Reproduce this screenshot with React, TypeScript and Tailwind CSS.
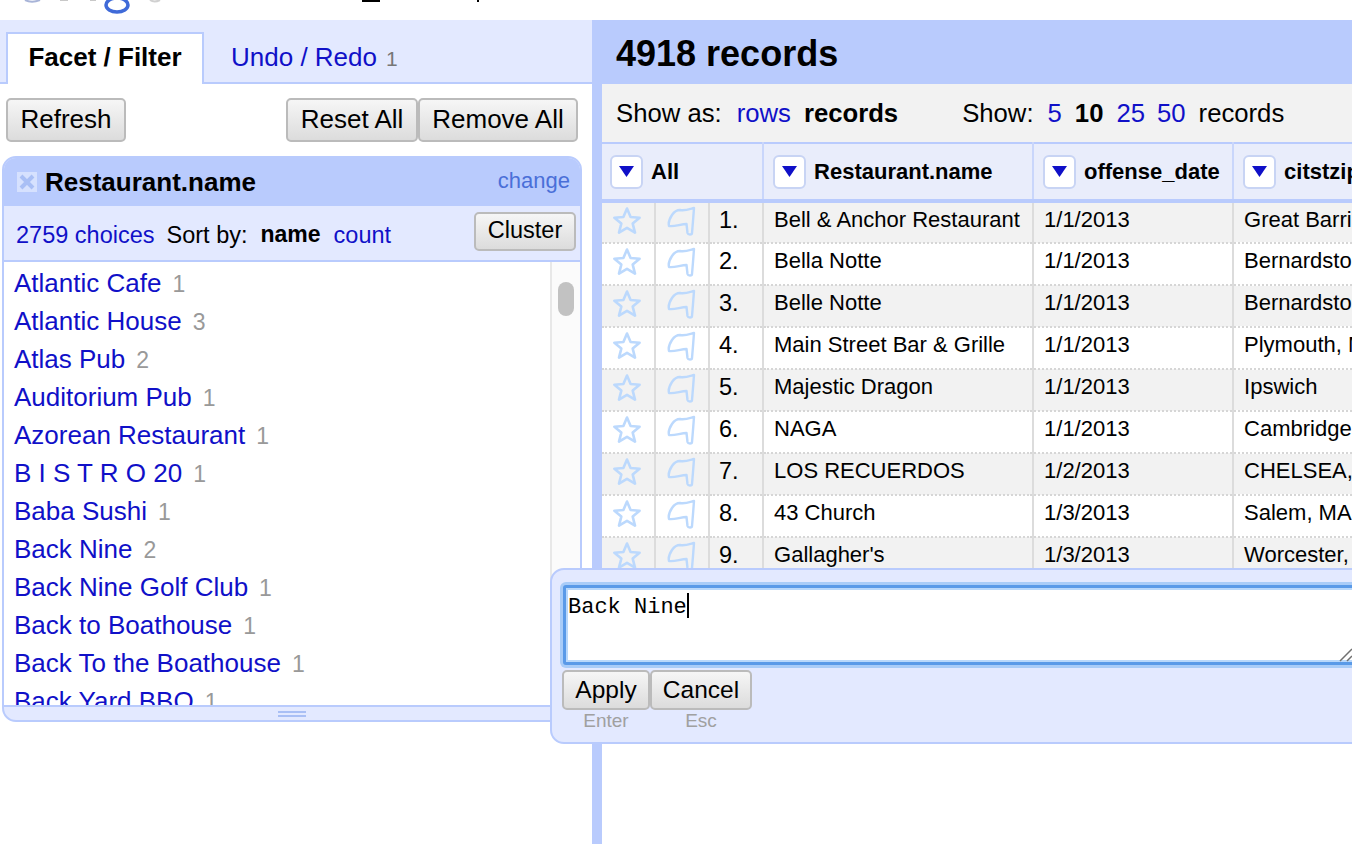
const facets: [string, number][] = [
  ["Atlantic Cafe", 1],
  ["Atlantic House", 3],
  ["Atlas Pub", 2],
  ["Auditorium Pub", 1],
  ["Azorean Restaurant", 1],
  ["B I S T R O 20", 1],
  ["Baba Sushi", 1],
  ["Back Nine", 2],
  ["Back Nine Golf Club", 1],
  ["Back to Boathouse", 1],
  ["Back To the Boathouse", 1],
  ["Back Yard BBQ", 1],
];

const rows = [
  ["1.", "Bell & Anchor Restaurant", "1/1/2013", "Great Barrington, MA"],
  ["2.", "Bella Notte", "1/1/2013", "Bernardston, MA"],
  ["3.", "Belle Notte", "1/1/2013", "Bernardston, MA"],
  ["4.", "Main Street Bar & Grille", "1/1/2013", "Plymouth, MA"],
  ["5.", "Majestic Dragon", "1/1/2013", "Ipswich"],
  ["6.", "NAGA", "1/1/2013", "Cambridge, MA"],
  ["7.", "LOS RECUERDOS", "1/2/2013", "CHELSEA, MA"],
  ["8.", "43 Church", "1/3/2013", "Salem, MA"],
  ["9.", "Gallagher's", "1/3/2013", "Worcester, MA"],
];

function Star() {
  return (
    <svg className="block blur-[0.4px]" width="30" height="30" viewBox="0 0 30 30" fill="none">
      <path d="M15 2.500l3.600 8.500 9 .7-6.900 5.900 2.300 9L15 21.800 7 26.600l2.300-9-6.900-5.900 9-.7z" stroke="#bcd9fd" strokeWidth="2.600" strokeLinejoin="round" />
    </svg>
  );
}

function Flag() {
  return (
    <svg className="block blur-[0.4px]" width="30" height="30" viewBox="0 0 30 30" fill="none">
      <path d="M6 9C8 6 10 4 14 4c5 1 10-1 14-2l-1 13-1 12c0 2-4 2-4.500 0l-1-9C15 18 8 21 3 20 2 16 4 12 6 9z" stroke="#bcd9fd" strokeWidth="2.400" strokeLinejoin="round" />
    </svg>
  );
}

function Arrow() {
  return (
    <span className="flex h-[34px] w-[33px] shrink-0 items-center justify-center rounded-[6px] border-2 border-[#c8d4f4] bg-white">
      <svg width="15" height="11" viewBox="0 0 15 11">
        <path d="M0 0h15L7.500 11z" fill="#1010c8" />
      </svg>
    </span>
  );
}

function Btn({ children, className = "" }: { children: React.ReactNode; className?: string }) {
  return (
    <button className={"flex items-center justify-center rounded-[5px] border-2 border-[#bbbbbb] bg-gradient-to-b from-[#f6f6f6] to-[#dcdcdc] text-black " + className}>
      {children}
    </button>
  );
}

export default function App() {
  return (
    <div className="relative flex h-[844px] w-[1352px] flex-col overflow-hidden bg-white font-['Liberation_Sans',Arial,sans-serif] text-[26px] text-black">
      <header className="relative h-5 shrink-0 overflow-hidden bg-white">
        <svg className="absolute left-[20px] top-0 blur-[0.6px]" width="150" height="16" viewBox="0 0 150 16" fill="none">
          <path d="M5 0c4 2 10 2 15 0" stroke="#a8b4d8" strokeWidth="2" />
          <path d="M40 0h8M70 0h6" stroke="#c8c8c8" strokeWidth="2" />
          <ellipse cx="97" cy="5" rx="11" ry="7" stroke="#3f6ad8" strokeWidth="3.500" />
          <path d="M130 0c3 2 6 2 10 0" stroke="#d0d0d0" strokeWidth="2" />
        </svg>
        <span className="absolute left-[362px] top-0 h-[2px] w-[18px] bg-black"></span>
        <span className="absolute left-[477px] top-0 h-[2px] w-[2px] bg-black"></span>
      </header>

      <main className="flex min-h-0 flex-1">
        <aside className="flex h-full w-[592px] shrink-0 flex-col">
          <div className="flex h-[64px] shrink-0 items-end border-b-2 border-[#b9cbfd] bg-[#e3e9ff] pl-[6px]">
            <div className="-mb-[2px] flex h-[52px] w-[198px] items-center justify-center border-2 border-b-0 border-[#b9cbfd] bg-white pb-[4px] font-bold">
              Facet / Filter
            </div>
            <div className="flex h-[50px] items-center pl-[27px] text-[#1010c8]">
              Undo / Redo<span className="ml-[9px] mt-[3px] text-[21px] text-[#777777]">1</span>
            </div>
          </div>

          <div className="flex items-start justify-between pl-[6px] pr-[14px] pt-[14px]">
            <Btn className="h-[44px] w-[120px] pb-[2px]">Refresh</Btn>
            <div className="flex">
              <Btn className="h-[44px] w-[132px] pb-[2px]">Reset All</Btn>
              <Btn className="h-[44px] w-[160px] pb-[2px]">Remove All</Btn>
            </div>
          </div>

          <section className="ml-[2px] mr-[10px] mt-[14px] flex h-[566px] flex-col overflow-hidden rounded-[14px] border-2 border-[#b9cbfd] bg-[#e3e9ff]">
            <div className="flex h-[48px] shrink-0 items-center justify-between bg-[#b9cbfd] pl-[13px] pr-[10px]">
              <div className="flex items-center gap-[8px]">
                <span className="flex h-[20px] w-[20px] items-center justify-center bg-[#d6e1fe]">
                  <svg width="16" height="16" viewBox="0 0 16 16"><path d="M2 2l12 12M14 2L2 14" stroke="#a9bff5" strokeWidth="4" /></svg>
                </span>
                <span className="font-bold">Restaurant.name</span>
              </div>
              <span className="mb-[3px] text-[22px] text-[#4a6fd8]">change</span>
            </div>
            <div className="flex h-[56px] shrink-0 items-center justify-between border-b-2 border-[#b9cbfd] pl-[12px] pr-[4px] text-[23.5px]">
              <div className="flex items-center pt-[5px]">
                <span className="text-[#1010c8]">2759 choices</span>
                <span className="ml-[12px]">Sort by:</span>
                <b className="-mt-[2px] ml-[13px] text-[23px]">name</b>
                <span className="ml-[13px] text-[#1010c8]">count</span>
              </div>
              <Btn className="mb-[4px] h-[39px] w-[102px] text-[23.5px]">Cluster</Btn>
            </div>
            <div className="relative min-h-0 flex-1 overflow-hidden bg-white pl-[10px]">
              <ul className="pt-[2px]">
                {facets.map(([name, n]) => (
                  <li key={name} className="flex h-[38px] items-center whitespace-nowrap">
                    <span className="text-[#1010c8]">{name}</span>
                    <span className="ml-[11px] mt-[2px] text-[23px] text-[#999999]">{n}</span>
                  </li>
                ))}
              </ul>
              <div className="absolute bottom-0 right-0 top-0 w-[30px] border-l-2 border-[#e8e8e8] bg-[#fbfbfb]">
                <div className="ml-[6px] mt-[20px] h-[34px] w-[16px] rounded-full bg-[#c2c2c2]"></div>
              </div>
            </div>
            <div className="flex h-[15px] shrink-0 flex-col items-center justify-center gap-[2px] border-t-2 border-[#b9cbfd]">
              <span className="h-[2px] w-[28px] bg-[#a9bff5]"></span>
              <span className="h-[2px] w-[28px] bg-[#a9bff5]"></span>
            </div>
          </section>
        </aside>

        <div className="h-full w-[10px] shrink-0 bg-[#b9cbfd]"></div>

        <section className="flex min-w-0 flex-1 flex-col overflow-hidden">
          <div className="-ml-[10px] flex h-[64px] shrink-0 items-center bg-[#b9cbfd] pl-[24px] pt-[4px] text-[36px] font-bold">
            4918 records
          </div>
          <div className="flex h-[58px] shrink-0 items-center bg-[#f2f2f2] pl-[14px] text-[25.7px]">
            <span>Show as:</span>
            <span className="ml-[15px] text-[#1010c8]">rows</span>
            <b className="ml-[13px]">records</b>
            <span className="ml-[64px]">Show:</span>
            <span className="ml-[14px] text-[#1010c8]">5</span>
            <b className="ml-[13px]">10</b>
            <span className="ml-[13px] text-[#1010c8]">25</span>
            <span className="ml-[12px] text-[#1010c8]">50</span>
            <span className="ml-[13px]">records</span>
          </div>

          <table className="w-[750px] table-fixed border-collapse text-[22px] leading-[26px]">
            <colgroup>
              <col className="w-[53px]" />
              <col className="w-[54px]" />
              <col className="w-[54px]" />
              <col className="w-[270px]" />
              <col className="w-[200px]" />
              <col className="w-[119px]" />
            </colgroup>
            <thead>
              <tr className="h-[58px] border-t-2 border-b-4 border-[#b9cbfd] bg-[#e9edfb]">
                <th colSpan={3} className="border-r-2 border-[#c9d6fb] pl-[8px] text-left font-bold">
                  <span className="flex items-center gap-[8px]"><Arrow />All</span>
                </th>
                <th className="border-r-2 border-[#c9d6fb] pl-[9px] text-left font-bold">
                  <span className="flex items-center gap-[8px] whitespace-nowrap"><Arrow />Restaurant.name</span>
                </th>
                <th className="border-r-2 border-[#c9d6fb] pl-[9px] text-left font-bold">
                  <span className="flex items-center gap-[8px] whitespace-nowrap"><Arrow />offense_date</span>
                </th>
                <th className="overflow-hidden pl-[9px] text-left font-bold">
                  <span className="flex items-center gap-[8px] whitespace-nowrap"><Arrow />citstzip</span>
                </th>
              </tr>
            </thead>
            <tbody>
              {rows.map((r, i) => (
                <tr key={r[0]} className={"h-[42px] border-b-2 border-dotted border-[#d6d6d6] " + (i % 2 === 0 ? "bg-[#f2f2f2]" : "bg-white")}>
                  <td className="border-r-2 border-[#dcdcdc] pb-[4px] pl-[10px]"><Star /></td>
                  <td className="border-r-2 border-[#dcdcdc] pb-[4px] pl-[10px]"><Flag /></td>
                  <td className="border-r-2 border-[#dcdcdc] pb-[6px] pl-[9px] text-[23.5px]">{r[0]}</td>
                  <td className="whitespace-nowrap border-r-2 border-[#dcdcdc] pb-[6px] pl-[10px]">{r[1]}</td>
                  <td className="border-r-2 border-[#dcdcdc] pb-[6px] pl-[10px]">{r[2]}</td>
                  <td className="overflow-hidden whitespace-nowrap pb-[6px] pl-[10px]">{r[3]}</td>
                </tr>
              ))}
            </tbody>
          </table>
        </section>
      </main>

      <div className="absolute left-[550px] top-[568px] h-[176px] w-[840px] rounded-[14px] border-2 border-[#b9cbfd] bg-[#e3e9ff] pl-[11px] pt-[15px]">
        <div className="relative h-[80px] w-[900px] rounded-[3px] border-[3px] border-[#5a9ae8] bg-white pl-[2px] font-['Liberation_Mono',monospace] text-[22px] leading-[22px] shadow-[0_0_0_3px_#a9ccf8,inset_0_0_0_2px_#b9d8fb]">
          Back Nine<span className="inline-block h-[25px] w-[2px] translate-y-[5px] bg-black"></span>
        </div>
        <div className="-ml-[1px] mt-[5px] flex text-[24.5px]">
          <Btn className="h-[40px] w-[88px]">Apply</Btn>
          <Btn className="h-[40px] w-[102px]">Cancel</Btn>
        </div>
        <div className="-ml-[1px] -mt-[3px] flex text-center text-[19px] text-[#a0a0a0]">
          <span className="w-[88px]">Enter</span>
          <span className="w-[102px]">Esc</span>
        </div>
      </div>
      <svg className="absolute left-[1339px] top-[645px]" width="13" height="17" viewBox="0 0 13 17">
        <path d="M1 16L13 4M8 16l5-5" stroke="#707070" strokeWidth="1.500" />
      </svg>
    </div>
  );
}
